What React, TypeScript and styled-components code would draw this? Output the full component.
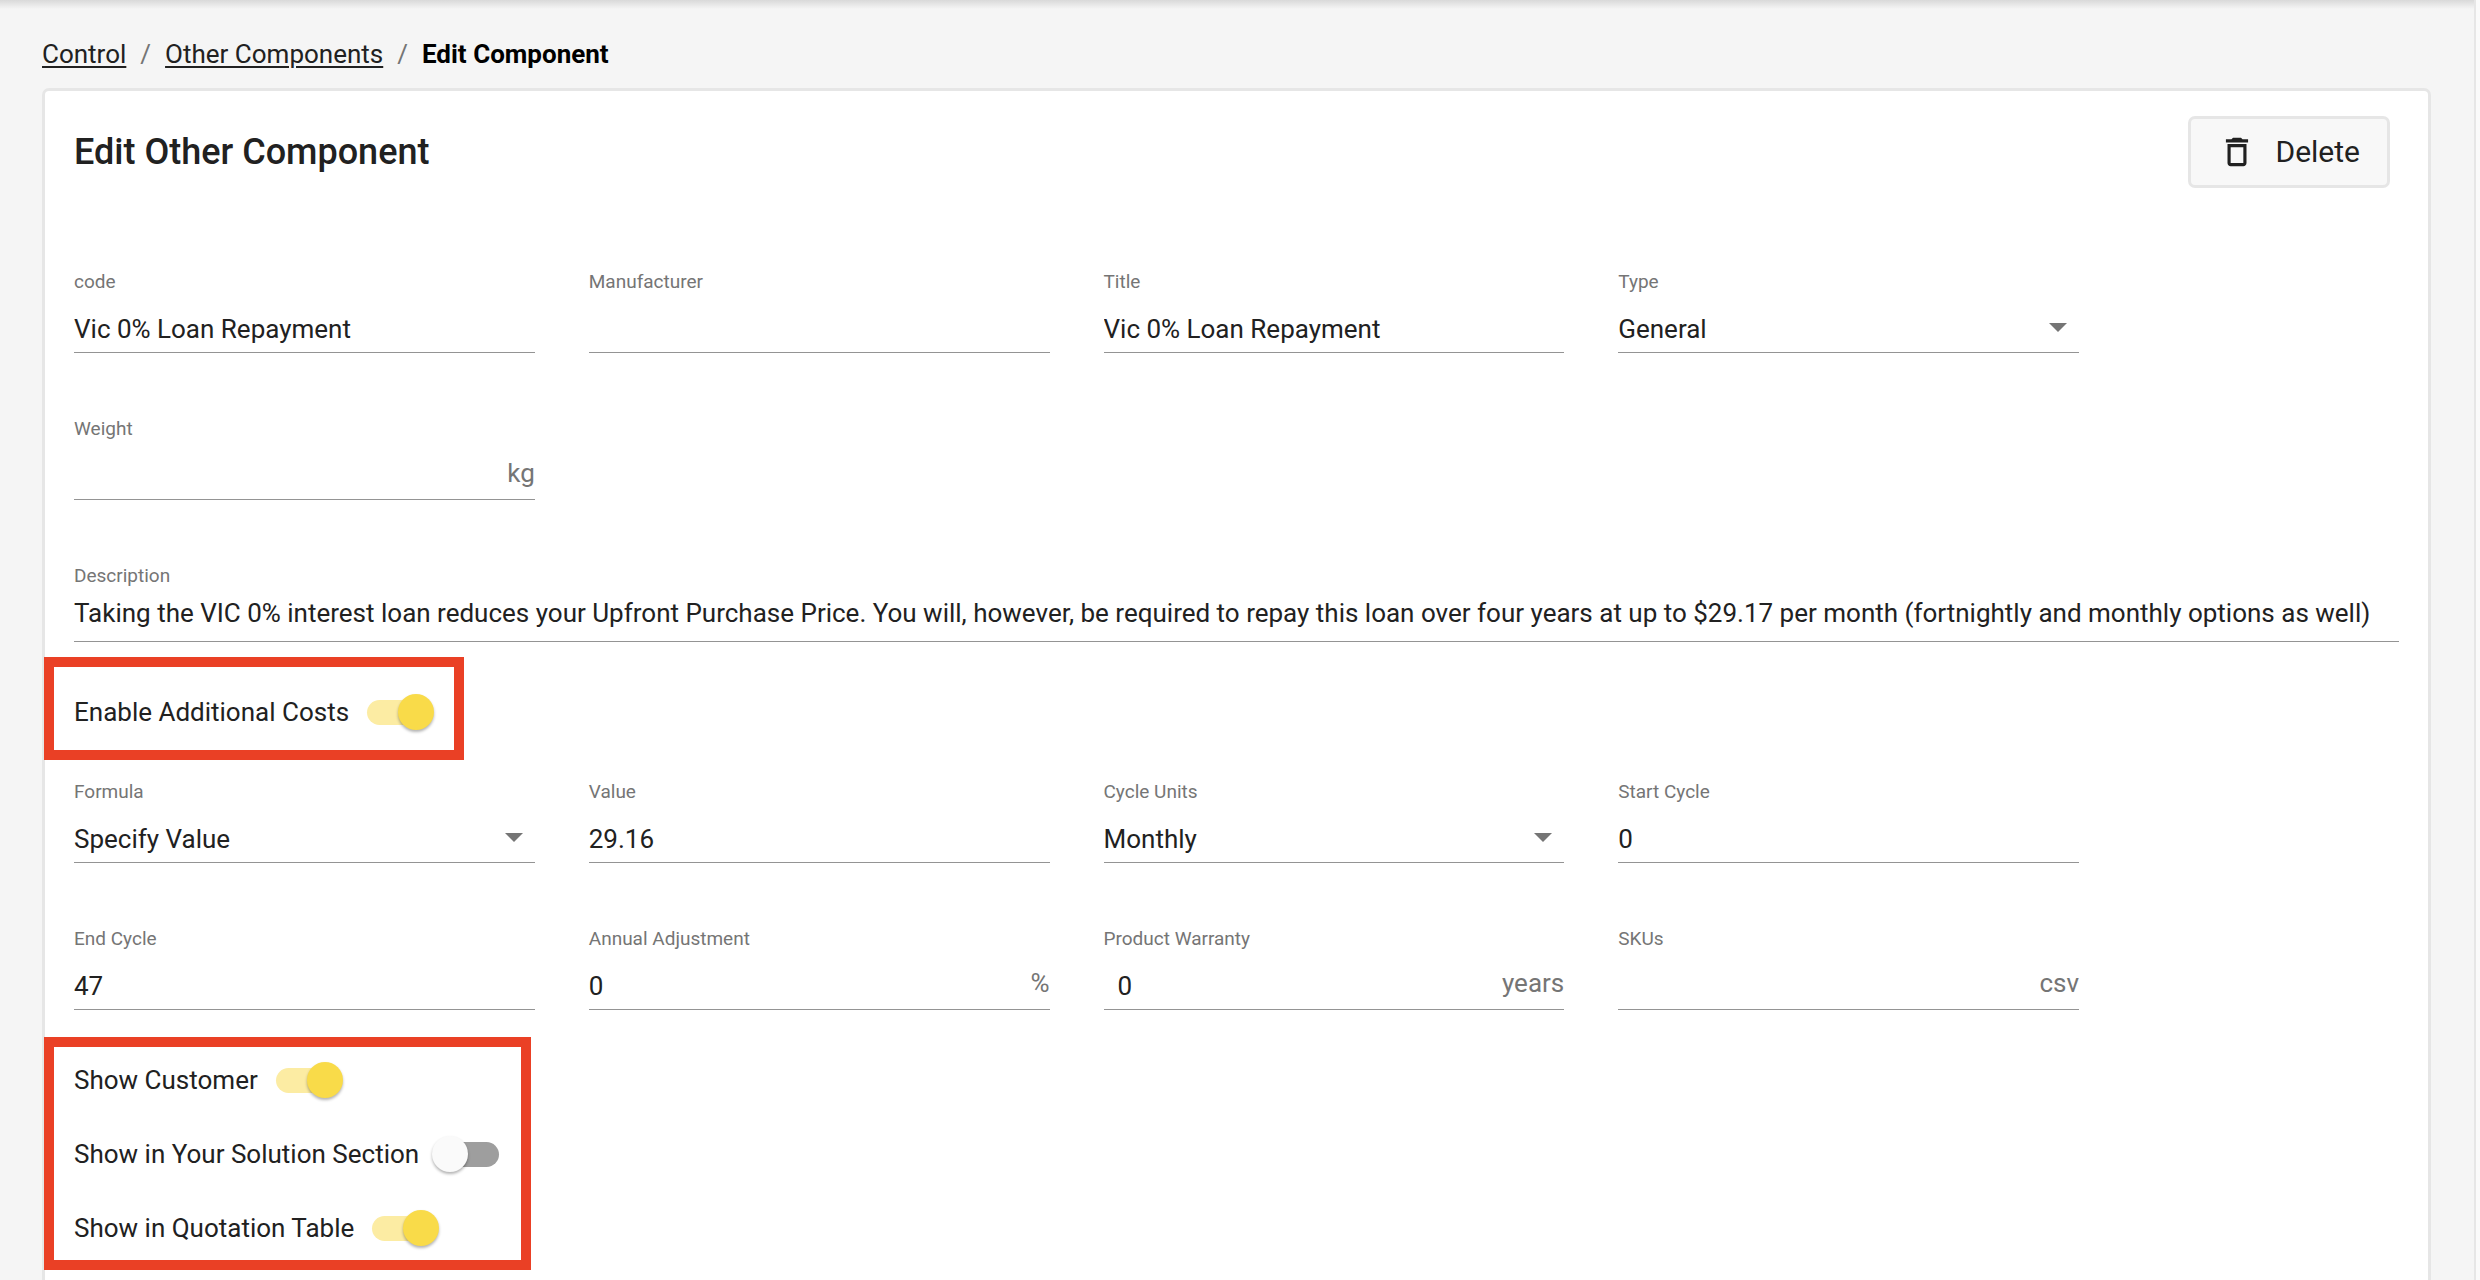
import { useId, useState, type ReactNode } from "react";
import styled, { createGlobalStyle } from "styled-components";

const GlobalStyle = createGlobalStyle`
  *, *::before, *::after { box-sizing: border-box; }
  body {
    margin: 0;
    background: #fafafa;
    color: #212121;
    font: 400 26px/32px Roboto, "Liberation Sans", sans-serif;
  }
`;

const Page = styled.main`
  display: flex;
  flex-direction: column;
  min-height: 100vh;
  margin-right: 4px;
  padding: 38px 43px 0 42px;
  border-right: 2px solid #e6e6e6;
  background: #f5f5f5 linear-gradient(#d9d9d9, #f5f5f5) 0 0 / 100% 9px no-repeat;
`;

const Breadcrumbs = styled.nav`
  margin-bottom: 18px;

  ol {
    display: flex;
    flex-wrap: wrap;
    margin: 0;
    padding: 0;
    list-style: none;
  }

  li + li::before {
    content: "/";
    margin: 0 14px;
    color: #757575;
  }
`;

const Crumb = styled.a`
  color: #212121;
  text-decoration: underline;
  text-decoration-thickness: 2px;
  text-underline-offset: 3px;
`;

const CurrentCrumb = styled.span`
  color: #000;
  font-weight: 700;
`;

const Card = styled.section`
  flex: 1;
  padding: 25px 29px 0;
  border: 3px solid #e6e6e6;
  border-bottom: 0;
  border-radius: 7px 7px 0 0;
  background: #fff;
`;

const CardHeader = styled.header`
  display: flex;
  align-items: center;
  justify-content: space-between;
  margin-bottom: 82px;
  padding-right: 9px;
`;

const Title = styled.h1`
  margin: 0;
  font-size: 36px;
  font-weight: 500;
  line-height: 42px;
`;

const DeleteButton = styled.button`
  display: flex;
  align-items: center;
  gap: 19px;
  height: 72px;
  padding: 0 27px;
  border: 3px solid #e6e6e6;
  border-radius: 7px;
  background: #f8f8f8;
  color: #212121;
  font: inherit;
  font-size: 30px;
  cursor: pointer;
`;

const FieldGrid = styled.div`
  display: grid;
  grid-template-columns: repeat(4, minmax(0, 1fr));
  gap: 64px 54px;
  padding-right: 320px;
`;

const FieldBox = styled.div`
  display: flex;
  flex-direction: column;
`;

const FieldLabel = styled.label`
  color: #757575;
  font-size: 19px;
  line-height: 24px;
`;

const Control = styled.div<{ $compact?: boolean }>`
  position: relative;
  display: flex;
  padding: ${(p) => (p.$compact ? "9px 0 12px" : "19px 0 7px")};
  border-bottom: 1px solid #949494;
`;

const TextInput = styled.input<{ $indent?: boolean }>`
  flex: 1;
  min-width: 0;
  height: 32px;
  padding: 0 0 0 ${(p) => (p.$indent ? 14 : 0)}px;
  border: 0;
  outline: 0;
  background: none;
  color: inherit;
  font: inherit;
`;

const Select = styled.select`
  flex: 1;
  min-width: 0;
  height: 32px;
  padding: 0;
  border: 0;
  outline: 0;
  appearance: none;
  background: none;
  color: inherit;
  font: inherit;
`;

const Arrow = styled.svg`
  position: absolute;
  right: 12px;
  bottom: 20px;
  fill: #757575;
  pointer-events: none;
`;

const Suffix = styled.span`
  margin: -3px 0 3px;
  color: #757575;
`;

const Description = styled.div`
  margin: 64px 0 15px;
`;

const Highlight = styled.div<{ $roomy?: boolean }>`
  display: flex;
  flex-direction: column;
  gap: 38px;
  width: fit-content;
  margin-left: -30px;
  padding: ${(p) => (p.$roomy ? "27px 25px 20px 20px" : "15px 22px 14px 20px")};
  border: 10px solid #ea4025;
`;

const Costs = styled.div`
  margin: 20px 0 27px;
`;

const ToggleRow = styled.label`
  display: flex;
  align-items: center;
  gap: 18px;
  height: 36px;
  cursor: pointer;
`;

const Switch = styled.input`
  display: flex;
  align-items: center;
  width: 62px;
  height: 25px;
  margin: 0;
  appearance: none;
  border-radius: 13px;
  background: #9e9e9e;
  cursor: pointer;

  &::before {
    content: "";
    flex: none;
    width: 36px;
    height: 36px;
    margin-left: -5px;
    border-radius: 50%;
    background: #fafafa;
    box-shadow: 0 2px 3px rgba(0, 0, 0, 0.3);
  }

  &:checked {
    background: #fceca3;
  }

  &:checked::before {
    margin-left: 31px;
    background: #f9db49;
  }
`;

type FieldProps = {
  label: string;
  value?: string;
  suffix?: string;
  indent?: boolean;
  compact?: boolean;
};

function TextField({ label, value = "", suffix, indent, compact }: FieldProps) {
  const id = useId();
  return (
    <FieldBox>
      <FieldLabel htmlFor={id}>{label}</FieldLabel>
      <Control $compact={compact}>
        <TextInput id={id} type="text" defaultValue={value} $indent={indent} />
        {suffix && <Suffix>{suffix}</Suffix>}
      </Control>
    </FieldBox>
  );
}

function SelectField({ label, value }: { label: string; value: string }) {
  const id = useId();
  return (
    <FieldBox>
      <FieldLabel htmlFor={id}>{label}</FieldLabel>
      <Control>
        <Select id={id} defaultValue={value}>
          <option>{value}</option>
        </Select>
        <Arrow width="18" height="9" viewBox="0 0 18 9" aria-hidden="true">
          <path d="M0 0h18L9 9z" />
        </Arrow>
      </Control>
    </FieldBox>
  );
}

function Toggle({ children, initial }: { children: ReactNode; initial: boolean }) {
  const [on, setOn] = useState(initial);
  return (
    <ToggleRow>
      {children}
      <Switch type="checkbox" role="switch" checked={on} onChange={() => setOn(!on)} />
    </ToggleRow>
  );
}

export default function App() {
  return (
    <>
      <GlobalStyle />
      <Page>
        <Breadcrumbs aria-label="Breadcrumb">
          <ol>
            <li><Crumb href="#control">Control</Crumb></li>
            <li><Crumb href="#components">Other Components</Crumb></li>
            <li><CurrentCrumb aria-current="page">Edit Component</CurrentCrumb></li>
          </ol>
        </Breadcrumbs>

        <Card>
          <CardHeader>
            <Title>Edit Other Component</Title>
            <DeleteButton type="button">
              <svg width="38" height="38" viewBox="0 0 24 24" fill="currentColor" aria-hidden="true">
                <path d="M16 9v10H8V9h8m-1.5-6h-5l-1 1H5v2h14V4h-3.5l-1-1zM18 7H6v12c0 1.1.9 2 2 2h8c1.1 0 2-.9 2-2V7z" />
              </svg>
              Delete
            </DeleteButton>
          </CardHeader>

          <FieldGrid>
            <TextField label="code" value="Vic 0% Loan Repayment" />
            <TextField label="Manufacturer" />
            <TextField label="Title" value="Vic 0% Loan Repayment" />
            <SelectField label="Type" value="General" />
            <TextField label="Weight" suffix="kg" />
          </FieldGrid>

          <Description>
            <TextField
              compact
              label="Description"
              value="Taking the VIC 0% interest loan reduces your Upfront Purchase Price. You will, however, be required to repay this loan over four years at up to $29.17 per month (fortnightly and monthly options as well)"
            />
          </Description>

          <Highlight $roomy>
            <Toggle initial>Enable Additional Costs</Toggle>
          </Highlight>

          <Costs>
            <FieldGrid>
              <SelectField label="Formula" value="Specify Value" />
              <TextField label="Value" value="29.16" />
              <SelectField label="Cycle Units" value="Monthly" />
              <TextField label="Start Cycle" value="0" />
              <TextField label="End Cycle" value="47" />
              <TextField label="Annual Adjustment" value="0" suffix="%" />
              <TextField label="Product Warranty" value="0" suffix="years" indent />
              <TextField label="SKUs" suffix="csv" />
            </FieldGrid>
          </Costs>

          <Highlight>
            <Toggle initial>Show Customer</Toggle>
            <Toggle initial={false}>Show in Your Solution Section</Toggle>
            <Toggle initial>Show in Quotation Table</Toggle>
          </Highlight>
        </Card>
      </Page>
    </>
  );
}
